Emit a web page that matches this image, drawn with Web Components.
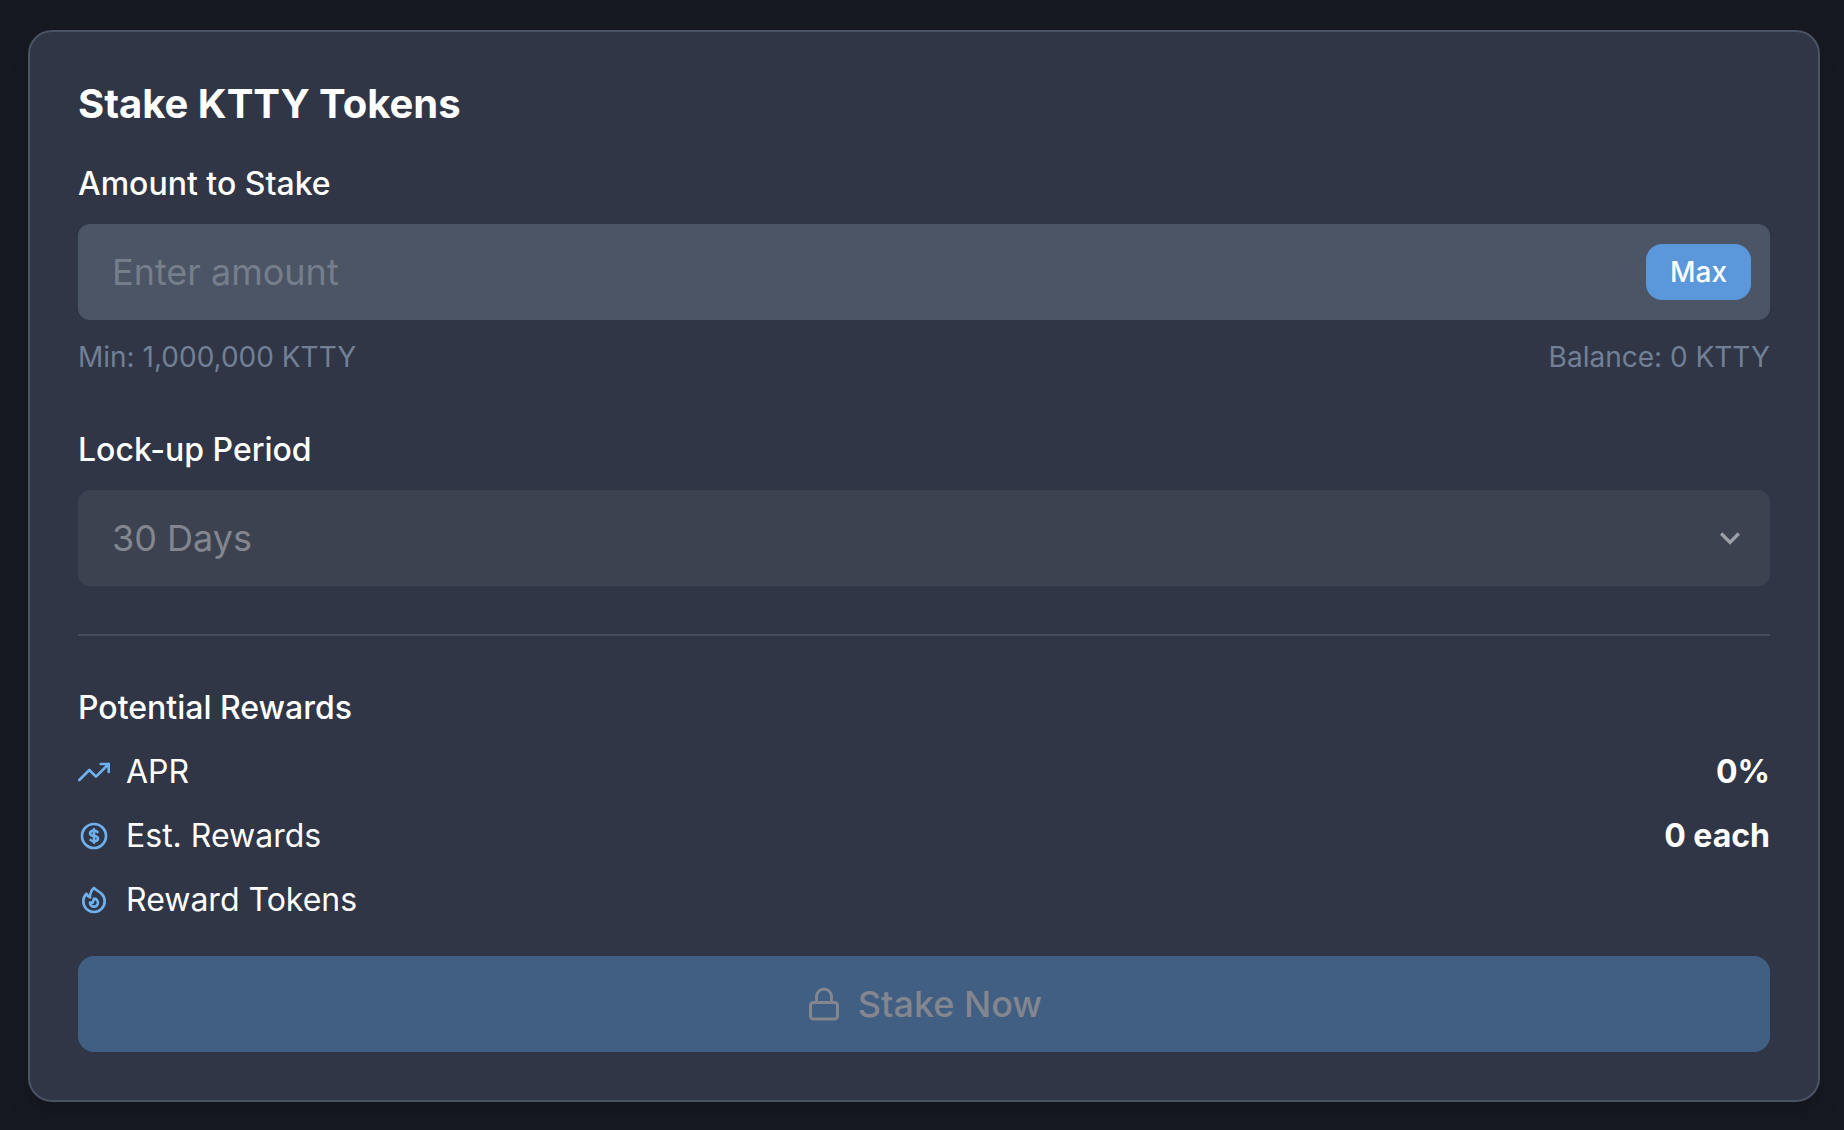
<!DOCTYPE html>
<html lang="en">
<head>
<meta charset="utf-8">
<title>Stake KTTY Tokens</title>
<style>
  html { background: #161920; }
  body {
    margin: 0;
    padding: 30px 24px 28px 28px;
    color: #fff;
    font-family: Inter, "Liberation Sans", sans-serif;
    font-size: 32px;
    line-height: 48px;
    --field: #4c5565;
    --muted: #718096;
    --icon: #6fb1ee;
  }
</style>
</head>
<body>
<stake-card heading="Stake KTTY Tokens">
  <amount-field label="Amount to Stake" placeholder="Enter amount">
    <span slot="min">Min: 1,000,000 KTTY</span>
    <span slot="balance">Balance: 0 KTTY</span>
  </amount-field>
  <period-field label="Lock-up Period" value="30 Days"></period-field>
  <reward-list heading="Potential Rewards">
    <reward-row icon="trend" label="APR">0%</reward-row>
    <reward-row icon="dollar" label="Est. Rewards">0 each</reward-row>
    <reward-row icon="flame" label="Reward Tokens"></reward-row>
  </reward-list>
  <stake-button slot="action">Stake Now</stake-button>
</stake-card>

<script>
const base = `<style>
  *, *::before { box-sizing: border-box; }
  :host { display: block; }
  h2, h3 { margin: 0; }
  button, input, select { font: inherit; margin: 0; border: 0; }
  svg { display: block; flex: none; }
  label { display: block; font-weight: 500; margin-bottom: 16px; font-variation-settings: "opsz" 16; }
</style>`;

class BaseElement extends HTMLElement {
  constructor() {
    super();
    this.attachShadow({ mode: 'open' });
  }
  connectedCallback() {
    this.shadowRoot.innerHTML = base + this.render();
  }
  attr(name) { return this.getAttribute(name) || ''; }
}

customElements.define('stake-card', class extends BaseElement {
  render() {
    return `<style>
      :host {
        background: #303645; border: 2px solid #4a5365; border-radius: 24px; padding: 48px;
        box-shadow: 0 20px 30px -6px rgba(0,0,0,.1), 0 8px 12px -4px rgba(0,0,0,.05);
      }
      h2 { font-size: 40px; line-height: 48px; font-weight: 700; margin-bottom: 32px;
        font-variation-settings: "opsz" 20; }
      .body { display: flex; flex-direction: column; gap: 48px; }
      .action { margin-top: 32px; }
    </style>
    <h2>${this.attr('heading')}</h2>
    <div class="body"><slot></slot></div>
    <div class="action"><slot name="action"></slot></div>`;
  }
});

customElements.define('amount-field', class extends BaseElement {
  render() {
    return `<style>
      .box { display: flex; align-items: center; height: 96px; padding-right: 19px;
        background: var(--field); border-radius: 12px; }
      input { flex: 1; min-width: 0; height: 96px; padding: 0 34px; background: none;
        color: #fff; font-size: 36px; outline: none; font-variation-settings: "opsz" 18; }
      input::placeholder { color: #757f8c; opacity: 1; }
      button { height: 56px; padding: 0 24px; border-radius: 16px; background: #5a97db;
        color: #fff; font-size: 28px; font-weight: 500; line-height: 34px; }
      .help { display: flex; justify-content: space-between; margin-top: 16px;
        color: var(--muted); font-size: 28px; line-height: 42px; }
    </style>
    <label for="amount">${this.attr('label')}</label>
    <div class="box">
      <input id="amount" type="text" inputmode="decimal" placeholder="${this.attr('placeholder')}">
      <button type="button">Max</button>
    </div>
    <div class="help"><slot name="min"></slot><slot name="balance"></slot></div>`;
  }
});

customElements.define('period-field', class extends BaseElement {
  render() {
    return `<style>
      .box { display: grid; align-items: center; }
      .box > * { grid-area: 1 / 1; }
      select { appearance: none; width: 100%; height: 96px; padding: 0 80px 0 34px; border-radius: 12px;
        background: #3d4251; color: #83868f; font-size: 36px; opacity: 1;
        font-variation-settings: "opsz" 18; }
      svg { justify-self: end; margin-right: 20px; color: #9b9fa7; pointer-events: none; }
    </style>
    <label for="period">${this.attr('label')}</label>
    <div class="box">
      <select id="period" disabled><option>${this.attr('value')}</option></select>
      <svg width="40" height="40" viewBox="0 0 24 24" fill="currentColor" aria-hidden="true"><path d="M16.59 8.59L12 13.17 7.41 8.59 6 10l6 6 6-6z"/></svg>
    </div>`;
  }
});

customElements.define('reward-list', class extends BaseElement {
  render() {
    return `<style>
      :host { border-top: 2px solid #444b5a; padding-top: 48px; font-variation-settings: "opsz" 16; }
      .rows { display: flex; flex-direction: column; gap: 16px; }
      h3 { font-size: 32px; line-height: 48px; font-weight: 500; }
    </style>
    <div class="rows"><h3>${this.attr('heading')}</h3><slot></slot></div>`;
  }
});

const stroke = 'fill="none" stroke="currentColor" stroke-width="2" stroke-linecap="round" stroke-linejoin="round"';
const icons = {
  trend: '<polyline points="23 6 13.5 15.5 8.5 10.5 1 18"/><polyline points="17 6 23 6 23 12"/>',
  dollar: '<path d="M12 8c-1.657 0-3 .895-3 2s1.343 2 3 2 3 .895 3 2-1.343 2-3 2m0-8c1.11 0 2.08.402 2.599 1M12 8V7m0 1v8m0 0v1m0-1c-1.11 0-2.08-.402-2.599-1M21 12a9 9 0 1 1-18 0 9 9 0 0 1 18 0z"/>',
  flame: '<path d="M17.657 18.657A8 8 0 0 1 6.343 7.343S7 9 9 10c0-2 .5-5 2.986-7C14 5 16.090 5.777 17.656 7.343A7.975 7.975 0 0 1 20 13a7.975 7.975 0 0 1-2.343 5.657z"/><path d="M9.879 16.121A3 3 0 1 0 12.015 11L11 14H9c0 .768.293 1.536.879 2.121z"/>'
};

customElements.define('reward-row', class extends BaseElement {
  render() {
    return `<style>
      :host { display: flex; justify-content: space-between; align-items: center; }
      .name { display: flex; align-items: center; gap: 16px; }
      svg { color: var(--icon); }
      .value { font-weight: 700; }
    </style>
    <span class="name">
      <svg width="32" height="32" viewBox="0 0 24 24" ${stroke} aria-hidden="true">${icons[this.attr('icon')]}</svg>
      <span>${this.attr('label')}</span>
    </span>
    <span class="value"><slot></slot></span>`;
  }
});

customElements.define('stake-button', class extends BaseElement {
  render() {
    return `<style>
      button { display: flex; align-items: center; justify-content: center; gap: 16px; width: 100%;
        height: 96px; border-radius: 16px; background: #415f82; color: #83868f;
        font-size: 36px; font-weight: 500; font-variation-settings: "opsz" 18; }
    </style>
    <button type="button" disabled>
      <svg width="36" height="36" viewBox="0 0 24 24" ${stroke} aria-hidden="true"><rect x="3" y="11" width="18" height="11" rx="2" ry="2"/><path d="M7 11V7a5 5 0 0 1 10 0v4"/></svg>
      <slot></slot>
    </button>`;
  }
});
</script>
</body>
</html>
